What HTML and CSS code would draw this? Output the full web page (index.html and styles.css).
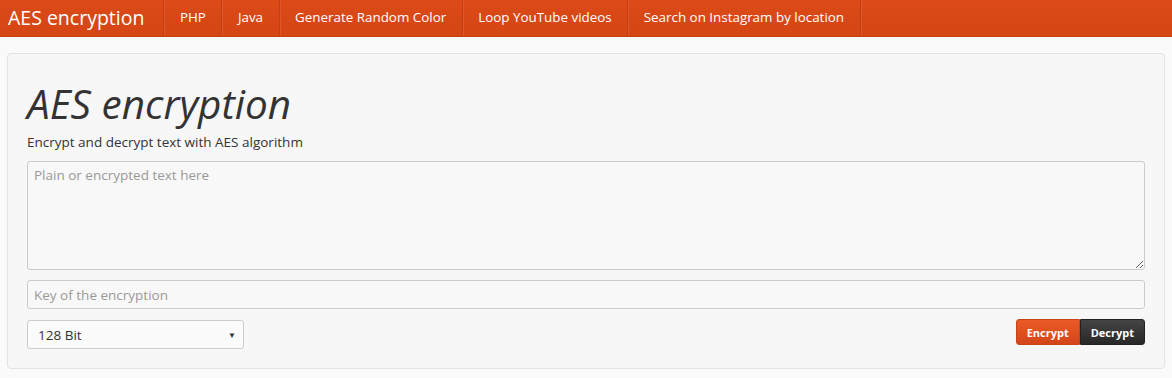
FILE: index.html
```html
<!DOCTYPE html>
<html lang="en">
<head>
    <meta charset="UTF-8">
    <title>AES encryption</title>
    <link rel="stylesheet" href="styles.css">
</head>
<body>
    <div class="navbar">
        <a class="brand" href="#">AES encryption</a>
        <ul class="nav">
            <li><a href="#">PHP</a></li>
            <li><a href="#">Java</a></li>
            <li><a href="#">Generate Random Color</a></li>
            <li><a href="#">Loop YouTube videos</a></li>
            <li><a href="#">Search on Instagram by location</a></li>
        </ul>
    </div>
    <div class="container">
        <div class="well">
            <h1>AES encryption</h1>
            <p class="lead">Encrypt and decrypt text with AES algorithm</p>
            <textarea class="field text" placeholder="Plain or encrypted text here"></textarea>
            <input class="field key" type="text" placeholder="Key of the encryption">
            <div class="actions">
                <div class="select">
                    <span>128 Bit</span>
                    <span class="caret">&#9660;</span>
                </div>
                <div class="btn-group">
                    <button class="btn btn-encrypt">Encrypt</button>
                    <button class="btn btn-decrypt">Decrypt</button>
                </div>
            </div>
        </div>
    </div>
</body>
</html>
```

FILE: styles.css
```css
body {
    margin: 0;
    padding: 0;
    background-color: #fafafa;
    color: #333;
    font-family: "Open Sans", "Noto Sans", sans-serif;
    font-size: 13.5px;
}
.navbar {
    display: flex;
    align-items: stretch;
    height: 37px;
    background: linear-gradient(#db4a17, #d54615);
    border-bottom: 1px solid #c4400f;
    box-sizing: border-box;
}
.brand {
    color: #fff;
    text-decoration: none;
    font-size: 19.5px;
    padding: 0 19px 0 8px;
    line-height: 35px;
}
.nav {
    display: flex;
    list-style: none;
    margin: 0;
    padding: 0;
    border-left: 1px solid #c23f12;
    box-shadow: inset 1px 0 0 #e0562a;
}
.nav li {
    border-right: 1px solid #c23f12;
    box-shadow: 1px 0 0 #e0562a;
}
.nav a {
    display: block;
    color: #fff;
    text-decoration: none;
    padding: 0 15.5px;
    line-height: 35px;
    font-size: 13.4px;
}
.container {
    padding: 16px 7px 0 7px;
}
.well {
    background-color: #f7f7f7;
    border: 1px solid #e3e3e3;
    border-radius: 4px;
    padding: 19px;
}
h1 {
    margin: 10px 0 7px 0;
    font-size: 40.5px;
    font-style: italic;
    font-weight: normal;
    line-height: 42px;
    color: #333;
}
.lead {
    margin: 0 0 9px 0;
    line-height: 20px;
    color: #333;
}
.field {
    display: block;
    width: 100%;
    box-sizing: border-box;
    background-color: #f8f8f8;
    border: 1px solid #ccc;
    border-radius: 3px;
    font-family: inherit;
    font-size: 13.5px;
    color: #555;
    padding: 4px 6px;
    margin: 0 0 10px 0;
}
.field::placeholder {
    color: #999;
}
.text {
    height: 109px;
    resize: vertical;
}
.key {
    height: 29px;
    margin-bottom: 11px;
}
.actions {
    display: flex;
    justify-content: space-between;
    align-items: flex-start;
}
.select {
    display: flex;
    justify-content: space-between;
    align-items: center;
    width: 217px;
    height: 29px;
    box-sizing: border-box;
    border: 1px solid #ccc;
    border-radius: 3px;
    background-color: #fbfbfb;
    padding: 0 7px 0 10px;
    font-size: 13.5px;
    color: #333;
}
.caret {
    font-size: 8px;
    color: #333;
}
.btn-group {
    display: flex;
    margin-top: -1px;
}
.btn {
    border: 1px solid;
    height: 26px;
    padding: 0 10px;
    font-family: inherit;
    font-size: 11px;
    font-weight: bold;
    color: #fff;
}
.btn-encrypt {
    background: linear-gradient(#ea5a26, #d3461a);
    border-color: #c9431a;
    border-radius: 3px 0 0 3px;
}
.btn-decrypt {
    background: linear-gradient(#444, #282828);
    border-color: #222;
    border-radius: 0 3px 3px 0;
}
```
